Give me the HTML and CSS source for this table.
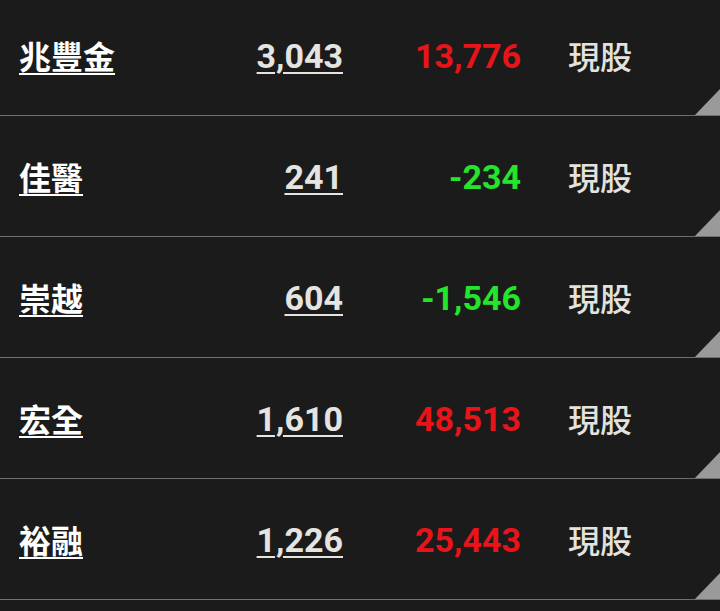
FILE: index.html
```html
<!DOCTYPE html>
<html lang="zh-Hant">
<head>
<meta charset="utf-8">
<link rel="stylesheet" href="styles.css">
</head>
<body>
<div class="list">
  <div class="row">
    <a class="name">兆豐金</a>
    <a class="qty">3,043</a>
    <span class="pl up">13,776</span>
    <span class="type">現股</span>
  </div>
  <div class="row">
    <a class="name">佳醫</a>
    <a class="qty">241</a>
    <span class="pl down">-234</span>
    <span class="type">現股</span>
  </div>
  <div class="row">
    <a class="name">崇越</a>
    <a class="qty">604</a>
    <span class="pl down">-1,546</span>
    <span class="type">現股</span>
  </div>
  <div class="row">
    <a class="name">宏全</a>
    <a class="qty">1,610</a>
    <span class="pl up">48,513</span>
    <span class="type">現股</span>
  </div>
  <div class="row">
    <a class="name">裕融</a>
    <a class="qty">1,226</a>
    <span class="pl up">25,443</span>
    <span class="type">現股</span>
  </div>
</div>
</body>
</html>
```

FILE: styles.css
```css
html, body {
  margin: 0;
  padding: 0;
  background: #1b1b1b;
  overflow: hidden;
}
.list {
  margin-top: -5px;
}
.row {
  position: relative;
  height: 120px;
  border-bottom: 1px solid #707070;
  display: grid;
  grid-template-columns: 200px 124px 178px auto;
  align-items: center;
  padding-left: 19px;
  font-family: "Noto Sans CJK TC", "Noto Sans", sans-serif;
}
.row::after {
  content: "";
  position: absolute;
  right: 0;
  bottom: 0;
  width: 25px;
  height: 26px;
  background: #9a9a9a;
  clip-path: polygon(100% 0, 100% 100%, 0 100%);
}
.name {
  color: #ffffff;
  font-size: 32px;
  font-weight: 700;
  text-decoration: underline;
  text-decoration-thickness: 2px;
  text-underline-offset: 4px;
  justify-self: start;
}
.qty {
  font-family: Roboto, "Liberation Sans", sans-serif;
  font-size: 34px;
  font-weight: 700;
  color: #e6e4e0;
  text-decoration: underline;
  text-decoration-thickness: 2px;
  text-underline-offset: 4px;
  justify-self: end;
  margin-top: 2px;
}
.pl {
  font-family: Roboto, "Liberation Sans", sans-serif;
  font-size: 34px;
  font-weight: 700;
  justify-self: end;
  margin-top: 2px;
}
.up { color: #e8141a; }
.down { color: #24e52b; }
.type {
  margin-left: 47px;
  color: #e4e2de;
  font-size: 32px;
  font-weight: 500;
}
```
